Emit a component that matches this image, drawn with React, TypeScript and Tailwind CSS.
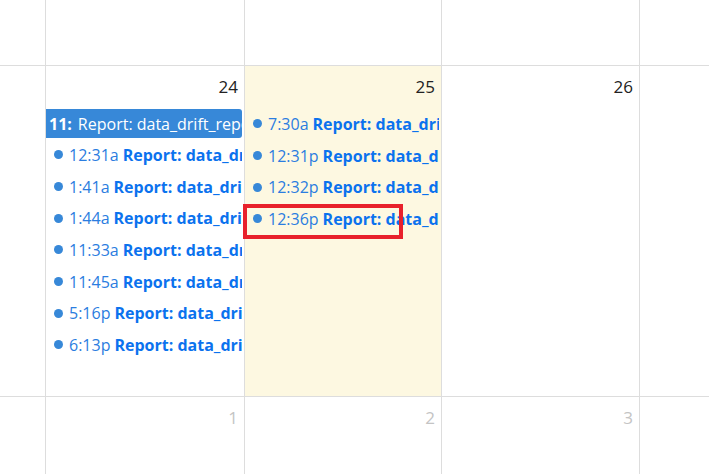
const left = ["12:31a", "1:41a", "1:44a", "11:33a", "11:45a", "5:16p", "6:13p"];
const mid = ["7:30a", "12:31p", "12:32p", "12:36p"];

function DotEvent({ time }: { time: string }) {
  return (
    <div className="flex h-[31.7px] items-center overflow-hidden whitespace-nowrap pl-[8px] mr-[2px]">
      <span className="mr-[6px] inline-block h-[9px] w-[9px] shrink-0 rounded-full bg-[#3788d8]" />
      <span className="text-[#2b7de0]">{time}</span>
      <span className="ml-[4px] font-bold text-[#0b72ee]">Report: data_drift_report</span>
    </div>
  );
}

function DayNum({ n, muted }: { n: string; muted?: boolean }) {
  return (
    <div
      className={`pr-[6px] pt-[9px] text-right text-[17px] leading-[24px] ${
        muted ? "text-[#c4c4c4]" : "text-[#222]"
      }`}
    >
      {n}
    </div>
  );
}

export default function App() {
  return (
    <div
      className="relative h-[474px] w-[709px] overflow-hidden bg-white text-[16px]"
      style={{ fontFamily: '"Open Sans", "Noto Sans", sans-serif' }}
    >
      {/* top row */}
      <div className="flex h-[66px] border-b border-[#ddd]">
        <div className="w-[46px] shrink-0 border-r border-[#ddd]" />
        <div className="w-[199px] shrink-0 border-r border-[#ddd]" />
        <div className="w-[197px] shrink-0 border-r border-[#ddd]" />
        <div className="w-[198px] shrink-0 border-r border-[#ddd]" />
        <div className="flex-1" />
      </div>

      {/* middle row */}
      <div className="flex h-[331px] border-b border-[#ddd]">
        <div className="w-[46px] shrink-0 border-r border-[#ddd]" />
        <div className="w-[199px] shrink-0 border-r border-[#ddd]">
          <DayNum n="24" />
          <div className="mt-[10px] flex h-[29px] items-center overflow-hidden whitespace-nowrap rounded-r-[3px] bg-[#3788d8] pl-[3px] mr-[2px] text-white">
            <span className="font-bold">11:</span>
            <span className="ml-[6px]">Report: data_drift_report</span>
          </div>
          <div className="mt-[1px]">
            {left.map((t) => (
              <DotEvent key={t} time={t} />
            ))}
          </div>
        </div>
        <div className="w-[197px] shrink-0 border-r border-[#ddd] bg-[#fdf8e1]">
          <DayNum n="25" />
          <div className="mt-[9px]">
            {mid.map((t) => (
              <DotEvent key={t} time={t} />
            ))}
          </div>
        </div>
        <div className="w-[198px] shrink-0 border-r border-[#ddd]">
          <DayNum n="26" />
        </div>
        <div className="flex-1" />
      </div>

      {/* bottom row */}
      <div className="flex h-[77px]">
        <div className="w-[46px] shrink-0 border-r border-[#ddd]" />
        <div className="w-[199px] shrink-0 border-r border-[#ddd]">
          <DayNum n="1" muted />
        </div>
        <div className="w-[197px] shrink-0 border-r border-[#ddd]">
          <DayNum n="2" muted />
        </div>
        <div className="w-[198px] shrink-0 border-r border-[#ddd]">
          <DayNum n="3" muted />
        </div>
        <div className="flex-1" />
      </div>

      {/* highlight annotation */}
      <div className="absolute left-[243px] top-[204px] h-[35px] w-[160px] border-[4px] border-[#e8212b]" />
    </div>
  );
}
